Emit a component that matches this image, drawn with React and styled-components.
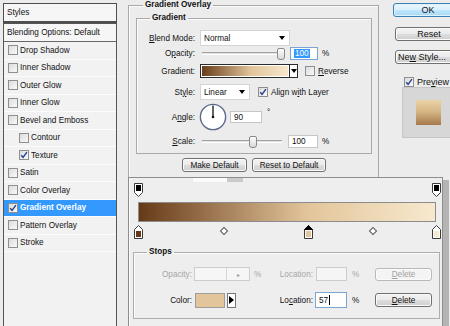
import styled, { createGlobalStyle } from "styled-components";

const GlobalStyle = createGlobalStyle`
  html, body {
    margin: 0;
    padding: 0;
  }
  body {
    background: #ececec;
    font-family: "Liberation Sans", Arial, sans-serif;
    font-size: 8.2px;
    color: #111;
  }
`;

const styleItems = [
  { label: "Drop Shadow" },
  { label: "Inner Shadow" },
  { label: "Outer Glow" },
  { label: "Inner Glow" },
  { label: "Bevel and Emboss" },
  { label: "Contour", sub: true },
  { label: "Texture", sub: true, checked: true },
  { label: "Satin" },
  { label: "Color Overlay" },
  { label: "Gradient Overlay", checked: true, active: true },
  { label: "Pattern Overlay" },
  { label: "Stroke" },
];

const colorStops = [
  { at: 0, color: "#663a18" },
  { at: 57, color: "#e3c59b", selected: true },
  { at: 100, color: "#f7e9ce" },
];
const opacityStops = [0, 100];
const midpoints = [28.5, 78.5];

const gradientCss = `linear-gradient(to right, ${colorStops
  .map((s) => `${s.color} ${s.at}%`)
  .join(", ")})`;

function Checkbox({ checked }) {
  return (
    <Box>
      {checked && (
        <svg width="8" height="8" viewBox="0 0 8 8">
          <path d="M1.2 4.2L3.1 6.3L6.9 1.2" fill="none" stroke="#23408f" strokeWidth="1.4" />
        </svg>
      )}
    </Box>
  );
}

function OpacityStop() {
  return (
    <svg width="9" height="14" viewBox="0 0 9 14">
      <path d="M0.5 0.5H8.5V9.5L4.5 13.5L0.5 9.5Z" fill="#fff" stroke="#3a3a3a" />
      <rect x="2" y="2" width="5" height="6" fill="#000" />
    </svg>
  );
}

function ColorStop({ color, selected }) {
  return (
    <svg width="9" height="14" viewBox="0 0 9 14">
      <path d="M4.5 0.5L8.5 4.5V13.5H0.5V4.5Z" fill="#fff" stroke="#3a3a3a" />
      {selected && <path d="M4.5 0.5L8.5 4.5H0.5Z" fill="#000" stroke="#000" />}
      <rect x="2" y="6" width="5" height="6" fill={color} />
    </svg>
  );
}

function Slider({ width, pos }) {
  return (
    <Track $w={width}>
      <Thumb style={{ left: pos }} />
    </Track>
  );
}

export default function App() {
  return (
    <>
      <GlobalStyle />
      <Screen>
        <StylesPanel>
          <PanelHeader>Styles</PanelHeader>
          <ListBox>
            <BlendRow>Blending Options: Default</BlendRow>
            {styleItems.map((item) => (
              <StyleRow key={item.label} $sub={item.sub} $active={item.active}>
                <Checkbox checked={item.checked} />
                {item.label}
              </StyleRow>
            ))}
          </ListBox>
        </StylesPanel>

        <Group $outer>
          <Legend $indent={7}>Gradient Overlay</Legend>
          <Group>
            <Legend $indent={13}>Gradient</Legend>
            <Field $h={16}>
              <Label>
                <u>B</u>lend Mode:
              </Label>
              <Control>
                <Select $w={90}>
                  Normal
                  <Arrow />
                </Select>
              </Control>
            </Field>
            <Field $h={13} $mt={1}>
              <Label>
                O<u>p</u>acity:
              </Label>
              <Control>
                <Slider width={83} pos={78} />
                <NumBox $w={28} $ml={5} $focus>
                  <Selected>100</Selected>
                </NumBox>
                <Unit>%</Unit>
              </Control>
            </Field>
            <Field $h={14} $mt={4}>
              <Label>Gradient:</Label>
              <Control>
                <GradientSwatch />
                <SwatchDrop>
                  <Arrow />
                </SwatchDrop>
                <Option $ml={7}>
                  <Checkbox />
                  <span>
                    <u>R</u>everse
                  </span>
                </Option>
              </Control>
            </Field>
            <Field $h={16} $mt={6}>
              <Label>
                St<u>y</u>le:
              </Label>
              <Control>
                <Select $w={50}>
                  Linear
                  <Arrow />
                </Select>
                <Option $ml={8}>
                  <Checkbox checked />
                  <span>
                    Align w<u>i</u>th Layer
                  </span>
                </Option>
              </Control>
            </Field>
            <Field $h={28} $mt={3}>
              <Label>
                A<u>n</u>gle:
              </Label>
              <Control>
                <Dial width="28" height="28" viewBox="0 0 28 28">
                  <circle cx="14" cy="14" r="12.6" fill="#fff" stroke="#5c6a8c" strokeWidth="1.4" />
                  <line x1="14" y1="14" x2="14" y2="2.5" stroke="#111" strokeWidth="1.3" />
                  <circle cx="14" cy="14" r="1.3" fill="#111" />
                </Dial>
                <NumBox $w={32} $h={12} $ml={3}>
                  90
                </NumBox>
                <Degree>°</Degree>
              </Control>
            </Field>
            <Field $h={13} $mt={4}>
              <Label>
                <u>S</u>cale:
              </Label>
              <Control>
                <Slider width={80} pos={50} />
                <NumBox $w={30} $ml={6}>
                  100
                </NumBox>
                <Unit>%</Unit>
              </Control>
            </Field>
          </Group>
          <ButtonRow>
            <Button $w={65}>Make Default</Button>
            <Button $w={74}>Reset to Default</Button>
          </ButtonRow>
        </Group>

        <ButtonColumn>
          <Button $w={70} $h={14} $mt={3} $default $big>
            OK
          </Button>
          <Button $w={68} $h={14} $mt={10} $ml={2} $big>
            Reset
          </Button>
          <Button $w={68} $h={14} $mt={9} $ml={2} $big $start>
            <span>
              Ne<u>w</u> Style...
            </span>
          </Button>
          <PreviewToggle>
            <Checkbox checked />
            <span>
              Pre<u>v</u>iew
            </span>
          </PreviewToggle>
          <PreviewBox>
            <PreviewSquare />
          </PreviewBox>
        </ButtonColumn>

        <Editor>
          <Grip />
          <StopTrack>
            <StopLane>
              {opacityStops.map((at) => (
                <Marker key={at} style={{ left: `${at}%` }}>
                  <OpacityStop />
                </Marker>
              ))}
            </StopLane>
            <GradientBar style={{ background: gradientCss }} />
            <StopLane $mt={3}>
              {midpoints.map((at) => (
                <Diamond key={at} style={{ left: `${at}%` }} />
              ))}
              {colorStops.map((s) => (
                <Marker key={s.at} style={{ left: `${s.at}%` }}>
                  <ColorStop color={s.color} selected={s.selected} />
                </Marker>
              ))}
            </StopLane>
          </StopTrack>

          <StopsGroup>
            <Legend $indent={13}>Stops</Legend>
            <StopsRow $h={14} $disabled>
              <RowLabel>Opacity:</RowLabel>
              <Cell>
                <Combo $ml={2} $w={56}>
                  <ComboText />
                  <ComboArrow>▸</ComboArrow>
                </Combo>
              </Cell>
              <Cell $pl={2}>%</Cell>
              <RowLabel>Location:</RowLabel>
              <Cell>
                <NumBox $w={31} $h={14} $ml={3} $disabled />
              </Cell>
              <Cell $pl={2}>%</Cell>
              <Button $w={57} $h={13} $disabled>
                <span>
                  <u>D</u>elete
                </span>
              </Button>
            </StopsRow>
            <StopsRow $h={16} $mt={11}>
              <RowLabel>Color:</RowLabel>
              <Cell>
                <ColorSwatch />
                <ColorMenu>
                  <svg width="5" height="8" viewBox="0 0 5 8">
                    <path d="M0 0L5 4L0 8Z" fill="#000" />
                  </svg>
                </ColorMenu>
              </Cell>
              <Cell />
              <RowLabel>
                Lo<u>c</u>ation:
              </RowLabel>
              <Cell>
                <NumBox $w={32} $h={16} $ml={2} $focus>
                  57
                  <Caret />
                </NumBox>
              </Cell>
              <Cell $pl={2}>%</Cell>
              <Button $w={57} $h={14}>
                <span>
                  <u>D</u>elete
                </span>
              </Button>
            </StopsRow>
          </StopsGroup>
        </Editor>
      </Screen>
    </>
  );
}

const Screen = styled.div`
  position: relative;
  width: 450px;
  height: 326px;
  overflow: hidden;
  display: flex;
  align-items: flex-start;
  background: #ececec;
`;

/* ---------- styles list ---------- */

const StylesPanel = styled.aside`
  flex: 0 0 114px;
  height: 323px;
  margin: 3px 0 0 3px;
  display: flex;
  flex-direction: column;
`;

const PanelHeader = styled.div`
  height: 20px;
  box-sizing: border-box;
  display: flex;
  align-items: center;
  padding-left: 3px;
  border: 1px solid #4e4e4e;
  border-bottom-width: 2px;
  background: #f6f6f6;
`;

const ListBox = styled.div`
  flex: 1;
  border: 1px solid #555;
  border-bottom: none;
  background: #f2f2f2;
`;

const BlendRow = styled.div`
  height: 18px;
  box-sizing: border-box;
  display: flex;
  align-items: center;
  padding-left: 3px;
  border-bottom: 1px solid #6a6a6a;
  background: #f6f6f6;
`;

const StyleRow = styled.div`
  height: 17.5px;
  box-sizing: border-box;
  display: flex;
  align-items: center;
  gap: 2px;
  padding-left: ${(p) => (p.$sub ? 15 : 4)}px;
  border-bottom: 1px solid #fcfcfc;
  background: ${(p) => (p.$active ? "#3399ff" : "transparent")};
  color: ${(p) => (p.$active ? "#fff" : "#111")};
  font-weight: ${(p) => (p.$active ? 700 : 400)};
`;

const Box = styled.span`
  flex: 0 0 auto;
  width: 10px;
  height: 10px;
  box-sizing: border-box;
  display: inline-flex;
  align-items: center;
  justify-content: center;
  border: 1px solid #8e8f8f;
  background: linear-gradient(135deg, #dcdcdc, #f9f9f9);
`;

/* ---------- gradient overlay settings ---------- */

const Group = styled.fieldset`
  box-sizing: border-box;
  min-width: 0;
  margin: ${(p) => (p.$outer ? "0 0 0 11px" : "0")};
  width: ${(p) => (p.$outer ? "251px" : "auto")};
  flex: 0 0 auto;
  padding: ${(p) => (p.$outer ? "3px 6px 14px 7px" : "7px 0 5px 0")};
  border: 1px solid #a9a9a9;
  box-shadow: 1px 1px 0 #fbfbfb inset;
`;

const Legend = styled.legend`
  margin-left: ${(p) => p.$indent}px;
  padding: 0 2px;
  line-height: 10px;
  font-weight: 700;
`;

const Field = styled.div`
  display: grid;
  grid-template-columns: 58px 1fr;
  column-gap: 5px;
  align-items: center;
  height: ${(p) => p.$h}px;
  margin-top: ${(p) => p.$mt || 0}px;
`;

const Label = styled.span`
  text-align: right;
  white-space: nowrap;
`;

const Control = styled.div`
  display: flex;
  align-items: center;
  height: 100%;
`;

const Select = styled.span`
  position: relative;
  width: ${(p) => p.$w}px;
  height: 16px;
  box-sizing: border-box;
  display: flex;
  align-items: center;
  justify-content: space-between;
  padding: 0 4px 0 3px;
  background: #fff;
  border: 1px solid #d4d4d4;
`;

const Arrow = styled.i`
  width: 0;
  height: 0;
  border-left: 3.5px solid transparent;
  border-right: 3.5px solid transparent;
  border-top: 4px solid #000;
`;

const Track = styled.div`
  position: relative;
  width: ${(p) => p.$w}px;
  height: 3px;
  margin-left: 2px;
  box-sizing: border-box;
  border-top: 1px solid #a3a3a3;
  border-bottom: 1px solid #fff;
  background: #e1e1e1;
`;

const Thumb = styled.span`
  position: absolute;
  top: -5px;
  width: 6px;
  height: 10px;
  margin-left: -3px;
  border: 1px solid #8a8a8a;
  border-radius: 2px 2px 3px 3px;
  background: linear-gradient(#fdfdfd, #d9d9d9);
`;

const NumBox = styled.span`
  flex: 0 0 auto;
  display: inline-flex;
  align-items: center;
  width: ${(p) => p.$w}px;
  height: ${(p) => p.$h || 13}px;
  box-sizing: border-box;
  margin-left: ${(p) => p.$ml || 0}px;
  padding-left: 3px;
  background: ${(p) => (p.$disabled ? "#f5f5f5" : "#fff")};
  border: 1px solid
    ${(p) => (p.$focus ? "#7ba4d4" : p.$disabled ? "#cdcdcd" : "#c6c6c6")};
`;

const Selected = styled.span`
  background: #3399ff;
  color: #fff;
  padding: 0 1px;
`;

const Unit = styled.span`
  margin-left: 4px;
`;

const Degree = styled.span`
  margin-left: 5px;
  align-self: flex-start;
  margin-top: 5px;
`;

const GradientSwatch = styled.span`
  width: 90px;
  height: 14px;
  box-sizing: border-box;
  border: 1px solid #2b2b2b;
  box-shadow: 0 0 0 1px #fff inset;
  background: ${gradientCss};
`;

const SwatchDrop = styled.span`
  width: 8px;
  height: 14px;
  box-sizing: border-box;
  display: flex;
  align-items: center;
  justify-content: center;
  border: 1px solid #2b2b2b;
  border-left: none;
  background: #fff;
`;

const Option = styled.span`
  display: inline-flex;
  align-items: center;
  gap: 3px;
  margin-left: ${(p) => p.$ml}px;
  white-space: nowrap;
`;

const Dial = styled.svg`
  flex: 0 0 auto;
  margin-left: -1px;
`;

const ButtonRow = styled.div`
  display: flex;
  gap: 5px;
  margin-top: 4px;
  padding-left: 46px;
`;

const Button = styled.span`
  flex: 0 0 auto;
  width: ${(p) => p.$w}px;
  height: ${(p) => p.$h || 14}px;
  box-sizing: border-box;
  margin-top: ${(p) => p.$mt || 0}px;
  margin-left: ${(p) => p.$ml || 0}px;
  display: inline-flex;
  align-items: center;
  justify-content: ${(p) => (p.$start ? "flex-start" : "center")};
  padding-left: ${(p) => (p.$start ? "2px" : "0")};
  white-space: nowrap;
  overflow: hidden;
  font-size: ${(p) => (p.$big ? "9px" : "inherit")};
  border-radius: 3px;
  border: 1px solid
    ${(p) => (p.$default ? "#3c7fb1" : p.$disabled ? "#b6b9bb" : "#707070")};
  color: ${(p) => (p.$disabled ? "#a2a2a2" : "#111")};
  box-shadow: inset 0 0 0 1px ${(p) => (p.$default ? "#dff2fc" : "#fbfbfb")};
  background: ${(p) =>
    p.$disabled
      ? "#f4f4f4"
      : p.$default
        ? "linear-gradient(#eaf6fd, #d9f0fc 50%, #bee6fd 51%, #a7d9f5)"
        : "linear-gradient(#f2f2f2, #ebebeb 50%, #dddddd 51%, #cfcfcf)"};
`;

/* ---------- right column ---------- */

const ButtonColumn = styled.div`
  flex: 0 0 70px;
  margin-left: 14px;
  display: flex;
  flex-direction: column;
  align-items: flex-start;
`;

const PreviewToggle = styled.span`
  display: inline-flex;
  align-items: center;
  gap: 3px;
  height: 10px;
  margin: 13px 0 0 11px;
  font-size: 9px;
`;

const PreviewBox = styled.div`
  width: 60px;
  height: 51px;
  box-sizing: border-box;
  margin-left: 9px;
  display: flex;
  align-items: center;
  padding-left: 13px;
  border: 1px solid #c6c6c6;
  background: #d7d7d7;
`;

const PreviewSquare = styled.span`
  width: 25px;
  height: 25px;
  background: linear-gradient(#ebd3a7, #d7b786 45%, #a67a4b);
`;

/* ---------- gradient editor window ---------- */

const Editor = styled.section`
  position: absolute;
  left: 128px;
  top: 177px;
  width: 315px;
  height: 160px;
  box-sizing: border-box;
  border: 1px solid #8d8d8d;
  border-bottom: none;
  background: #eeeeee;
  box-shadow:
    inset 1px 0 0 #fafafa,
    6px 3px 0 #b4b4b4;
`;

const Grip = styled.div`
  width: 50px;
  height: 4px;
  margin-left: 64px;
  background: linear-gradient(to right, #fbfbfb 68%, #cacaca 68%);
`;

const StopTrack = styled.div`
  width: 298px;
  margin: 1px 0 0 9px;
`;

const StopLane = styled.div`
  position: relative;
  height: 14px;
  margin-top: ${(p) => p.$mt || 0}px;
`;

const Marker = styled.span`
  position: absolute;
  top: 0;
  width: 9px;
  height: 14px;
  margin-left: -4px;
`;

const Diamond = styled.span`
  position: absolute;
  top: 3px;
  width: 4px;
  height: 4px;
  margin-left: -2px;
  border: 1px solid #555;
  background: #fff;
  transform: rotate(45deg);
`;

const GradientBar = styled.div`
  height: 20px;
  margin-top: 5px;
  box-sizing: border-box;
  border: 1px solid #8c8c8c;
`;

const StopsGroup = styled.fieldset`
  box-sizing: border-box;
  min-width: 0;
  width: 307px;
  margin: 8px 0 0 4px;
  padding: 10px 0 10px 0;
  border: 1px solid #adadad;
  box-shadow: 1px 1px 0 #fbfbfb inset;
`;

const StopsRow = styled.div`
  display: grid;
  grid-template-columns: 58px 60px 12px 49px 37px 25px 57px;
  align-items: center;
  height: ${(p) => p.$h}px;
  margin-top: ${(p) => p.$mt || 0}px;
  color: ${(p) => (p.$disabled ? "#a6a6a6" : "#111")};
`;

const RowLabel = styled.span`
  text-align: right;
  white-space: nowrap;
`;

const Cell = styled.span`
  display: flex;
  align-items: center;
  padding-left: ${(p) => p.$pl || 0}px;
`;

const Combo = styled.span`
  display: flex;
  width: ${(p) => p.$w}px;
  height: 14px;
  box-sizing: border-box;
  margin-left: ${(p) => p.$ml}px;
  border: 1px solid #cdcdcd;
  background: #f6f6f6;
`;

const ComboText = styled.span`
  flex: 1;
  border-right: 1px solid #d6d6d6;
`;

const ComboArrow = styled.span`
  width: 22px;
  display: flex;
  align-items: center;
  justify-content: center;
  font-size: 6px;
  color: #9a9a9a;
`;

const ColorSwatch = styled.span`
  width: 30px;
  height: 15px;
  margin-left: 3px;
  box-sizing: border-box;
  border: 1px solid #9d9d9d;
  background: #e3c59b;
`;

const ColorMenu = styled.span`
  width: 9px;
  height: 15px;
  margin-left: 2px;
  box-sizing: border-box;
  display: flex;
  align-items: center;
  justify-content: center;
  border: 1px solid #777;
  background: #fff;
`;

const Caret = styled.span`
  width: 1px;
  height: 10px;
  margin-left: 1px;
  background: #000;
`;
